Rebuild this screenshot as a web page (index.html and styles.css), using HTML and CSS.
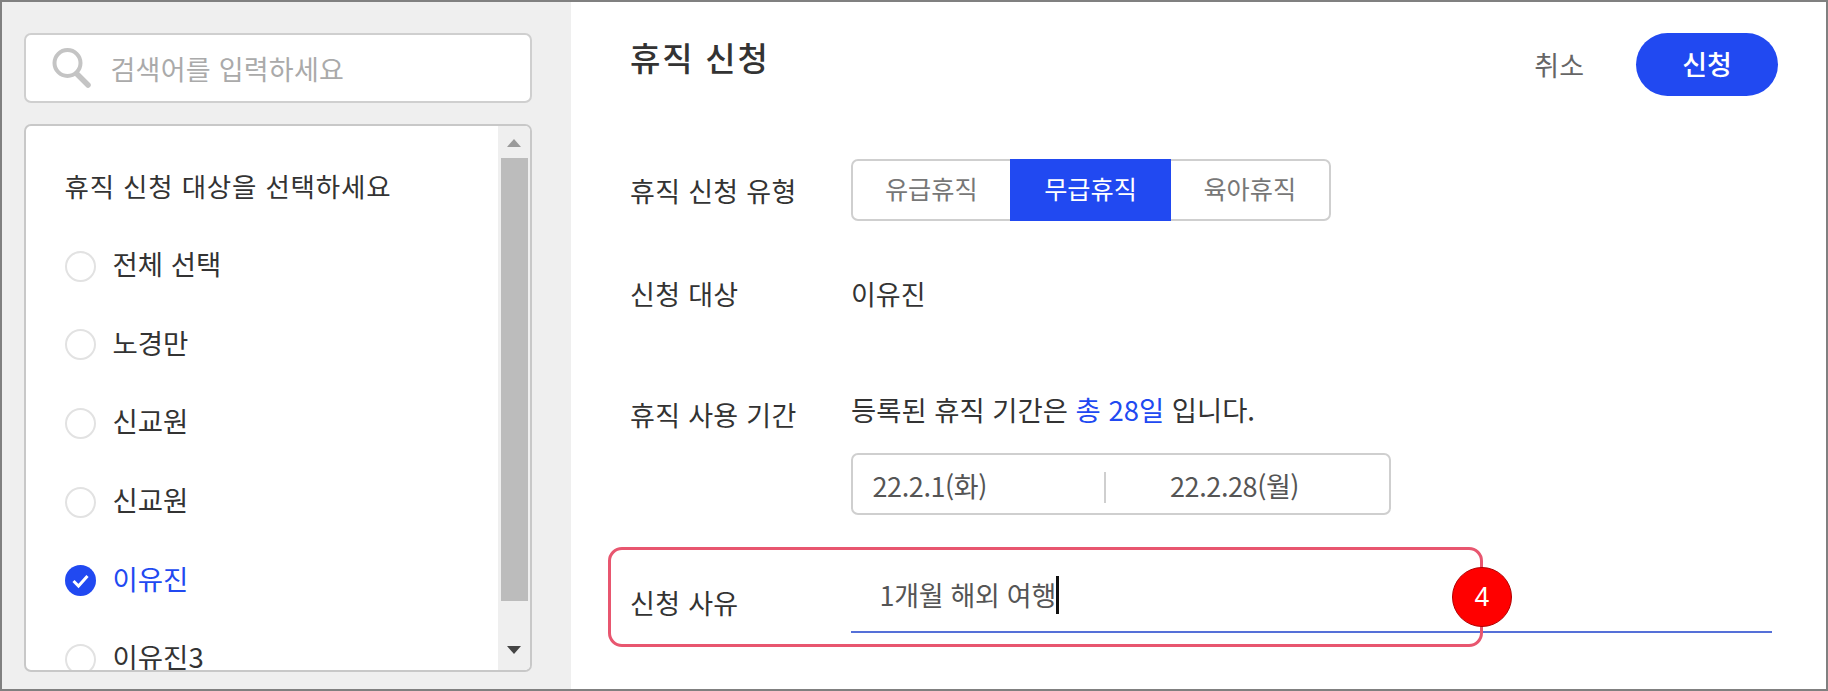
FILE: index.html
```html
<!DOCTYPE html>
<html lang="ko">
<head>
<meta charset="utf-8">
<title>휴직 신청</title>
<link rel="stylesheet" href="styles.css">
</head>
<body>
<div class="frame">
  <aside class="side">
    <div class="search">
      <svg class="search-icon" width="40" height="42" viewBox="0 0 40 42" fill="none">
        <circle cx="15.5" cy="16" r="13" stroke="#c4c4c4" stroke-width="4"/>
        <path d="M25 27l11 11" stroke="#c4c4c4" stroke-width="5.5" stroke-linecap="round"/>
      </svg>
      <span class="search-text">검색어를 입력하세요</span>
    </div>
    <div class="list-box">
      <div class="list">
        <h2 class="list-title">휴직 신청 대상을 선택하세요</h2>
        <div class="item"><span class="radio"></span><span>전체 선택</span></div>
        <div class="item"><span class="radio"></span><span>노경만</span></div>
        <div class="item"><span class="radio"></span><span>신교원</span></div>
        <div class="item"><span class="radio"></span><span>신교원</span></div>
        <div class="item item-on">
          <svg class="check" width="31" height="31" viewBox="0 0 31 31">
            <circle cx="15.5" cy="15.5" r="15.5" fill="#2149f1"/>
            <path d="M8.5 16l5 5 9-10" fill="none" stroke="#fff" stroke-width="3"/>
          </svg>
          <span>이유진</span>
        </div>
        <div class="item"><span class="radio"></span><span>이유진3</span></div>
      </div>
      <div class="scrollbar">
        <span class="arrow arrow-up"></span>
        <span class="thumb"></span>
        <span class="arrow arrow-down"></span>
      </div>
    </div>
  </aside>
  <main class="content">
    <header class="head">
      <h1 class="title">휴직 신청</h1>
      <div class="actions">
        <span class="cancel">취소</span>
        <span class="submit">신청</span>
      </div>
    </header>
    <div class="row row-type">
      <span class="label">휴직 신청 유형</span>
      <div class="segments">
        <span class="seg">유급휴직</span>
        <span class="seg seg-on">무급휴직</span>
        <span class="seg">육아휴직</span>
      </div>
    </div>
    <div class="row row-target">
      <span class="label">신청 대상</span>
      <span class="value">이유진</span>
    </div>
    <div class="row row-period">
      <span class="label label-period">휴직 사용 기간</span>
      <div class="period">
        <p class="period-text">등록된 휴직 기간은 <em class="accent">총 28일</em> 입니다.</p>
        <div class="dates">
          <span class="date date-a">22.2.1(화)</span>
          <span class="date-sep"></span>
          <span class="date date-b">22.2.28(월)</span>
        </div>
      </div>
    </div>
    <div class="row row-reason">
      <span class="label">신청 사유</span>
      <div class="reason-input"><span class="reason-text">1개월 해외 여행</span><span class="caret"></span></div>
      <div class="highlight"></div>
      <div class="badge">4</div>
    </div>
  </main>
</div>
</body>
</html>
```
FILE: styles.css
```css
* { box-sizing: border-box; }
html, body { margin: 0; padding: 0; }
body {
  width: 1828px;
  height: 691px;
  overflow: hidden;
  font-family: "Noto Sans CJK KR", "Noto Sans", sans-serif;
  color: #333;
}
.frame {
  display: flex;
  width: 1828px;
  height: 691px;
  border: 2px solid #808080;
  background: #fff;
}
.side {
  width: 569px;
  flex: none;
  background: #efefef;
  padding: 31px 39px 0 21.5px;
}
.search {
  height: 70px;
  display: flex;
  align-items: center;
  padding-left: 26px;
  background: #fff;
  border: 2px solid #cfcfcf;
  border-radius: 7px;
}
.search-icon { flex: none; margin-right: 19px; }
.search-text { font-size: 27px; color: #aaa; letter-spacing: 0.25px; }
.list-box {
  margin-top: 21px;
  height: 548px;
  display: flex;
  overflow: hidden;
  background: #fff;
  border: 2px solid #c8c8c8;
  border-radius: 7px;
}
.list {
  flex: 1;
  padding: 0 0 0 39px;
  overflow: hidden;
}
.list-title {
  margin: 0;
  padding-top: 38px;
  font-size: 26.5px;
  line-height: 44px;
  font-weight: 400;
  letter-spacing: 0.8px;
  color: #333;
}
.item {
  display: flex;
  align-items: center;
  height: 78.6px;
  font-size: 27.5px;
  color: #333;
  gap: 17px;
  position: relative;
}
.list-title + .item { margin-top: 19px; }
.item > span:last-child { position: relative; top: -3px; }
.radio {
  width: 31px;
  height: 31px;
  border: 2.5px solid #e2e2e2;
  border-radius: 50%;
  flex: none;
}
.check { flex: none; }
.item-on { color: #2149f1; }
.scrollbar {
  width: 32px;
  flex: none;
  background: #efefef;
  display: flex;
  flex-direction: column;
  align-items: center;
}
.thumb {
  width: 27px;
  height: 443px;
  background: #bcbcbc;
  margin-top: 11px;
}
.arrow { width: 0; height: 0; border-left: 7px solid transparent; border-right: 7px solid transparent; }
.arrow-up { border-bottom: 8px solid #9a9a9a; margin-top: 13px; }
.arrow-down { border-top: 8px solid #444; margin-top: 45px; }
.content {
  flex: 1;
  padding: 0 48px 0 59px;
  position: relative;
}
.head {
  display: flex;
  justify-content: space-between;
  height: 157px;
  padding-top: 29px;
}
.title {
  margin: 0;
  font-size: 33px;
  line-height: 52px;
  font-weight: 500;
  letter-spacing: 1.8px;
  color: #333;
}
.actions { display: flex; align-items: flex-start; margin-top: 2px; }
.cancel {
  font-size: 27px;
  line-height: 63px;
  color: #666;
  margin-right: 52px;
}
.submit {
  width: 142px;
  height: 63px;
  border-radius: 32px;
  background: #2149f1;
  color: #fff;
  font-size: 27px;
  line-height: 61px;
  text-align: center;
  font-weight: 500;
}
.row { display: flex; }
.label {
  width: 220.5px;
  flex: none;
  font-size: 27px;
  letter-spacing: 0.3px;
  color: #333;
}
.row-type { height: 62px; align-items: center; }
.segments {
  display: flex;
  width: 480px;
  height: 62px;
  border: 2px solid #cfcfcf;
  border-radius: 7px;
}
.seg {
  flex: 1;
  margin: -2px 0;
  text-align: center;
  font-size: 25.2px;
  line-height: 58px;
  color: #777;
}
.seg-on { background: #2149f1; color: #fff; flex: none; width: 161px; }
.row-target {
  height: 44px;
  margin-top: 50px;
  align-items: center;
}
.value { font-size: 27px; color: #333; padding-left: 0.5px; }
.row-period { margin-top: 72px; }
.label-period { padding-top: 6px; line-height: 44px; }
.period-text {
  margin: 0;
  padding-left: 0.5px;
  font-size: 27.4px;
  line-height: 44px;
  color: #333;
}
.accent { font-style: normal; color: #2149f1; }
.dates {
  display: flex;
  align-items: center;
  width: 540px;
  height: 62px;
  margin-top: 22px;
  padding-left: 20px;
  border: 2px solid #cfcfcf;
  border-radius: 7px;
}
.date { font-size: 27px; color: #555; letter-spacing: -0.4px; position: relative; top: 1px; }
.date-a { width: 231.5px; }
.date-sep { width: 2px; height: 31px; background: #cfcfcf; position: relative; top: 3px; }
.date-b { margin-left: 64px; }
.row-reason { margin-top: 55px; height: 62px; align-items: center; }
.row-reason .label { padding-top: 2px; }
.reason-input {
  flex: 1;
  height: 64px;
  margin-right: 6px;
  display: flex;
  align-items: flex-start;
  padding: 0 0 0 29px;
  border-bottom: 2px solid #5570d8;
}
.reason-text { font-size: 27px; line-height: 38px; color: #555; letter-spacing: -0.3px; margin-top: 7px; }
.caret { width: 3px; height: 38px; background: #111; margin-top: 7px; }
.highlight {
  position: absolute;
  left: 36.5px;
  top: 544.5px;
  width: 875px;
  height: 100px;
  border: 3px solid #e8566f;
  border-radius: 14px;
  pointer-events: none;
}
.badge {
  position: absolute;
  left: 881px;
  top: 565px;
  width: 60px;
  height: 60px;
  border-radius: 50%;
  background: #f00;
  border: 1px solid #b00000;
  color: #fff;
  font-family: "Liberation Sans", Arial, sans-serif;
  font-size: 27px;
  line-height: 58px;
  text-align: center;
}
```
